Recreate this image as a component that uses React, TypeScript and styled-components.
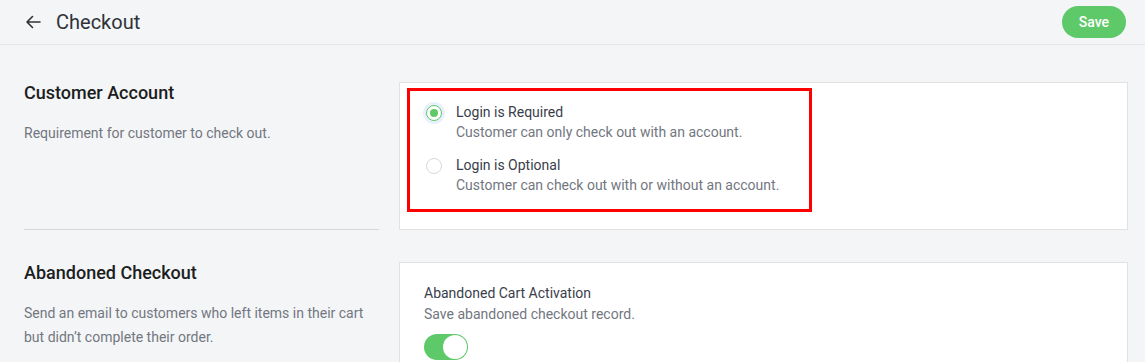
import React from "react";
import styled, { createGlobalStyle } from "styled-components";

const Global = createGlobalStyle`
  html, body { margin: 0; padding: 0; background: #f4f5f7; }
  body { font-family: Roboto, "Liberation Sans", sans-serif; color: #333; }
  * { box-sizing: border-box; }
`;

const Page = styled.div`
  min-height: 362px;
  background: #f4f5f7;
`;

const Header = styled.header`
  height: 45px;
  display: flex;
  align-items: center;
  justify-content: space-between;
  padding: 0 19px 0 24px;
  border-bottom: 1px solid #e3e5e8;
`;

const TitleGroup = styled.div`
  display: flex;
  align-items: center;
  gap: 15px;
`;

const BackButton = styled.button`
  display: flex;
  align-items: center;
  justify-content: center;
  padding: 0;
  width: 17px;
  height: 24px;
  border: none;
  background: none;
  color: #333;
  cursor: pointer;
`;

const PageTitle = styled.h1`
  margin: 0;
  font-size: 20px;
  font-weight: 400;
  color: #2f3337;
`;

const SaveButton = styled.button`
  height: 32px;
  padding: 0 17px;
  border: none;
  border-radius: 16px;
  background: #5ec968;
  color: #fff;
  font-family: Roboto, "Liberation Sans", sans-serif;
  font-size: 14px;
  font-weight: 500;
  cursor: pointer;
`;

const Content = styled.main`
  display: flex;
  flex-direction: column;
  gap: 32px;
  padding: 37px 17px 0 24px;
`;

const Section = styled.section`
  display: grid;
  grid-template-columns: 355px 1fr;
  column-gap: 20px;
`;

const Info = styled.div<{ $divider?: boolean }>`
  border-bottom: ${(p) => (p.$divider ? "1px solid #d6d8db" : "none")};
`;

const SectionTitle = styled.h2`
  margin: 0;
  font-size: 18px;
  line-height: 22px;
  font-weight: 500;
  color: #1b1d21;
`;

const SectionDesc = styled.p`
  margin: 17px 0 0;
  font-size: 14px;
  line-height: 24px;
  color: #72777f;
`;

const Card = styled.div<{ $pad: string }>`
  background: #fff;
  border: 1px solid #e1e2e4;
  padding: ${(p) => p.$pad};
`;

const Highlight = styled.div`
  width: 405px;
  border: 3px solid #ff0000;
  padding: 11px 0 14px 14px;
  display: flex;
  flex-direction: column;
  gap: 13px;
`;

const Option = styled.label`
  display: flex;
  align-items: flex-start;
  gap: 14px;
  cursor: pointer;
`;

const RadioDot = styled.span<{ $checked?: boolean }>`
  flex: none;
  width: 16px;
  height: 16px;
  margin-top: 3px;
  margin-left: 2px;
  border-radius: 50%;
  border: 1px solid ${(p) => (p.$checked ? "#5ec968" : "#d9d9d9")};
  background: #fff;
  box-shadow: ${(p) => (p.$checked ? "0 0 0 3px #e8f1fb" : "none")};
  display: flex;
  align-items: center;
  justify-content: center;
  &::after {
    content: "";
    width: 8px;
    height: 8px;
    border-radius: 50%;
    background: ${(p) => (p.$checked ? "#5ec968" : "transparent")};
  }
`;

const OptionText = styled.div`
  display: flex;
  flex-direction: column;
`;

const OptionLabel = styled.span`
  font-size: 14px;
  line-height: 20px;
  color: #3a3d4a;
`;

const OptionDesc = styled.span`
  font-size: 14px;
  line-height: 20px;
  color: #72777f;
`;

const CardDesc = styled.p`
  margin: 1px 0 0;
  font-size: 14px;
  line-height: 20px;
  color: #72777f;
`;

const Toggle = styled.span<{ $on?: boolean }>`
  display: flex;
  align-items: center;
  justify-content: ${(p) => (p.$on ? "flex-end" : "flex-start")};
  width: 44px;
  height: 26px;
  margin-top: 10px;
  padding: 1px;
  border-radius: 13px;
  background: ${(p) => (p.$on ? "#5ec968" : "#d9d9d9")};
  &::after {
    content: "";
    width: 24px;
    height: 24px;
    border-radius: 50%;
    background: #fff;
  }
`;

function ArrowLeft() {
  return (
    <svg width="16" height="16" viewBox="0 0 16 16" fill="none">
      <path
        d="M15 8H2M7.5 2.5L2 8l5.5 5.5"
        stroke="#2f3337"
        strokeWidth="1.6"
        strokeLinecap="round"
        strokeLinejoin="round"
      />
    </svg>
  );
}

export default function App() {
  return (
    <Page>
      <Global />
      <Header>
        <TitleGroup>
          <BackButton aria-label="Back">
            <ArrowLeft />
          </BackButton>
          <PageTitle>Checkout</PageTitle>
        </TitleGroup>
        <SaveButton>Save</SaveButton>
      </Header>
      <Content>
        <Section>
          <Info $divider>
            <SectionTitle>Customer Account</SectionTitle>
            <SectionDesc>Requirement for customer to check out.</SectionDesc>
          </Info>
          <Card $pad="5px 7px 17px">
            <Highlight>
              <Option>
                <RadioDot $checked />
                <OptionText>
                  <OptionLabel>Login is Required</OptionLabel>
                  <OptionDesc>Customer can only check out with an account.</OptionDesc>
                </OptionText>
              </Option>
              <Option>
                <RadioDot />
                <OptionText>
                  <OptionLabel>Login is Optional</OptionLabel>
                  <OptionDesc>Customer can check out with or without an account.</OptionDesc>
                </OptionText>
              </Option>
            </Highlight>
          </Card>
        </Section>
        <Section>
          <Info>
            <SectionTitle>Abandoned Checkout</SectionTitle>
            <SectionDesc>
              Send an email to customers who left items in their cart but didn’t complete their order.
            </SectionDesc>
          </Info>
          <Card $pad="20px 24px 24px">
            <OptionLabel>Abandoned Cart Activation</OptionLabel>
            <CardDesc>Save abandoned checkout record.</CardDesc>
            <Toggle $on />
          </Card>
        </Section>
      </Content>
    </Page>
  );
}
